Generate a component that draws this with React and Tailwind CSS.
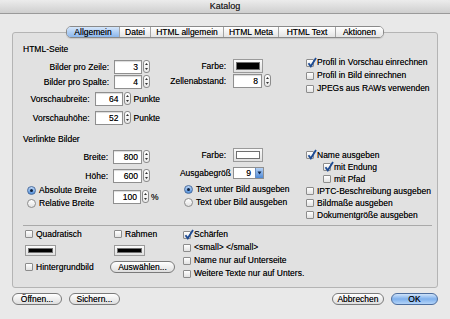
import React from 'react'

function Check({ checked }) {
  return (
    <span className="relative inline-block w-[8px] h-[8px] shrink-0 border border-[#8c8c8c] rounded-[1px] bg-gradient-to-b from-white to-[#e2e2e2]">
      {checked && (
        <svg className="absolute left-[0px] top-[-3px]" width="10" height="11" viewBox="0 0 10 11">
          <path d="M1.5 6.2 L3.8 9.3 L9 1" fill="none" stroke="#1d4a93" strokeWidth="1.8" />
        </svg>
      )}
    </span>
  )
}

function CheckRow({ checked, label, h = 'h-[12px]', className = '' }) {
  return (
    <div className={`flex items-center gap-[3px] ${h} ${className}`}>
      <Check checked={checked} />
      <span>{label}</span>
    </div>
  )
}

function Radio({ on }) {
  return on ? (
    <span className="flex items-center justify-center w-[9px] h-[9px] shrink-0 rounded-full border border-[#4b6d9e] bg-gradient-to-b from-[#bcd6f6] to-[#4f8ed8]">
      <span className="w-[3px] h-[3px] rounded-full bg-[#10203c]" />
    </span>
  ) : (
    <span className="inline-block w-[9px] h-[9px] shrink-0 rounded-full border border-[#8c8c8c] bg-gradient-to-b from-white to-[#e2e2e2]" />
  )
}

function RadioRow({ on, label }) {
  return (
    <div className="flex items-center gap-[3px] h-[13px]">
      <Radio on={on} />
      <span>{label}</span>
    </div>
  )
}

function Stepper() {
  return (
    <span className="inline-block w-[7px] h-[13px] shrink-0 rounded-[3px] border border-[#8c8c8c] bg-gradient-to-b from-white to-[#e8e8e8]">
      <svg width="5" height="11" viewBox="0 0 5 11" className="block">
        <path d="M2.5 2 L4 4 L1 4 Z" fill="#333" />
        <path d="M2.5 9 L4 7 L1 7 Z" fill="#333" />
      </svg>
    </span>
  )
}

function Field({ value, w = 'w-[28px]' }) {
  return (
    <span className={`flex items-center justify-end h-[14px] ${w} pr-[3px] border border-[#8f8f8f] bg-white shadow-[inset_0_1px_1px_rgba(0,0,0,0.15)]`}>
      {value}
    </span>
  )
}

function Well({ fill = 'bg-black', size = 'w-[30px] h-[14px]' }) {
  return (
    <span className={`block ${size} p-[2px] border border-[#9a9a9a] bg-gradient-to-b from-[#fbfbfb] to-[#e0e0e0]`}>
      <span className={`block w-full h-full border border-[#6f6f6f] ${fill}`} />
    </span>
  )
}

function Pill({ children, w, ok = false, h = 'h-[12px]' }) {
  const skin = ok
    ? 'border-[#4e6e9e] bg-gradient-to-b from-[#cfe3f9] via-[#7fb0ec] to-[#b4d4f8]'
    : 'border-[#7a7a7a] bg-gradient-to-b from-white to-[#dedede]'
  return (
    <span className={`flex items-center justify-center ${w} ${h} rounded-full border ${skin}`}>
      {children}
    </span>
  )
}

const tabs = [
  ['Allgemein', 'w-[52px]'],
  ['Datei', 'w-[31px]'],
  ['HTML allgemein', 'w-[73px]'],
  ['HTML Meta', 'w-[55px]'],
  ['HTML Text', 'w-[57px]'],
  ['Aktionen', 'w-[48px]'],
]

export default function App() {
  return (
    <div className="w-[450px] h-[319px] overflow-hidden bg-[#e9e9e9] text-black text-[8.5px] leading-none font-['Liberation_Sans',Arial,sans-serif] [text-shadow:0_0_0.5px_rgba(0,0,0,0.55)]">
      {/* title bar */}
      <div className="h-[14px] flex items-center justify-center rounded-t-[4px] border-b border-[#9a9a9a] bg-gradient-to-b from-[#ececec] to-[#cfcfcf] text-[9px] text-[#222]">
        Katalog
      </div>

      {/* tabs */}
      <div className="relative z-10 mt-[12px] flex justify-center">
        <div className="flex h-[12px] rounded-[5px] border border-[#8a8a8a] overflow-hidden shadow-[0_1px_1px_rgba(0,0,0,0.12)] text-[8.5px]">
          {tabs.map(([t, w], i) => (
            <span
              key={t}
              className={`flex items-center justify-center ${w} ${i > 0 ? 'border-l border-[#a3a3a3]' : ''} ${
                i === 0 ? 'bg-gradient-to-b from-[#d5e6fa] to-[#8cb7ec]' : 'bg-gradient-to-b from-white to-[#e4e4e4]'
              }`}
            >
              {t}
            </span>
          ))}
        </div>
      </div>

      {/* group box */}
      <div className="mx-[12px] mt-[-6px] h-[256px] rounded-[3px] border border-[#b4b4b4] bg-[#e1e1e1] pt-[9px] pl-[10px]">
        {/* HTML-Seite */}
        <div className="flex">
          <div className="w-[137px] flex flex-col">
            <div className="h-[14px] flex items-center">HTML-Seite</div>
            {[
              ['Bilder pro Zeile:', '3', 'mt-[4px]', false],
              ['Bilder pro Spalte:', '4', 'mt-[1px]', false],
              ['Vorschaubreite:', '64', 'mt-[3px]', true],
              ['Vorschauhöhe:', '52', 'mt-[5px]', true],
            ].map(([l, v, mt, pk]) => (
              <div key={l} className={`flex items-center h-[14px] ${mt}`}>
                <span className="w-[86px] text-right">{l}</span>
                <span className="ml-[5px]"><Field value={v} /></span>
                <span className="ml-[1px]"><Stepper /></span>
                {pk && <span className="ml-[3px]">Punkte</span>}
              </div>
            ))}
          </div>
          <div className="w-[145px] flex flex-col">
            <div className="flex items-center h-[14px] mt-[17px]">
              <span className="w-[66px] text-right">Farbe:</span>
              <span className="ml-[7px]"><Well /></span>
            </div>
            <div className="flex items-center h-[14px] mt-[1px]">
              <span className="w-[66px] text-right">Zellenabstand:</span>
              <span className="ml-[7px]"><Field value="8" w="w-[29px]" /></span>
              <span className="ml-[2px]"><Stepper /></span>
            </div>
          </div>
          <div className="flex flex-col mt-[14px] pl-[1px]">
            <CheckRow checked label="Profil in Vorschau einrechnen" h="h-[13px]" />
            <CheckRow label="Profil in Bild einrechnen" h="h-[13px]" />
            <CheckRow label="JPEGs aus RAWs verwenden" h="h-[13px]" />
          </div>
        </div>

        {/* Verlinkte Bilder */}
        <div className="flex mt-[7px]">
          <div className="w-[137px] flex flex-col">
            <div className="h-[14px] flex items-center">Verlinkte Bilder</div>
            <div className="flex items-center h-[14px] mt-[4px]">
              <span className="w-[85px] text-right">Breite:</span>
              <span className="ml-[5px]"><Field value="800" w="w-[29px]" /></span>
              <span className="ml-[1px]"><Stepper /></span>
            </div>
            <div className="flex items-center h-[14px] mt-[5px]">
              <span className="w-[85px] text-right">Höhe:</span>
              <span className="ml-[5px]"><Field value="600" w="w-[29px]" /></span>
              <span className="ml-[1px]"><Stepper /></span>
            </div>
            <div className="flex items-center mt-[1px]">
              <div className="w-[90px] flex flex-col pl-[4px]">
                <RadioRow on label="Absolute Breite" />
                <RadioRow label="Relative Breite" />
              </div>
              <Field value="100" w="w-[28px]" />
              <span className="ml-[1px]"><Stepper /></span>
              <span className="ml-[2px]">%</span>
            </div>
          </div>
          <div className="w-[145px] flex flex-col">
            <div className="flex items-center h-[14px] mt-[16px]">
              <span className="w-[66px] text-right">Farbe:</span>
              <span className="ml-[7px]"><Well fill="bg-white" /></span>
            </div>
            <div className="flex items-center h-[12px] mt-[5px]">
              <span className="w-[71px] text-right">Ausgabegröß</span>
              <span className="ml-[2px] flex h-[12px] w-[31px] border border-[#8f8f8f] bg-white">
                <span className="flex-1 flex items-center justify-end pr-[4px]">9</span>
                <span className="flex items-center justify-center w-[8px] border-l border-[#6b8fbf] bg-gradient-to-b from-[#b6d2f5] to-[#4d89d6]">
                  <svg width="5" height="4" viewBox="0 0 5 4"><path d="M0.5 0.5 L4.5 0.5 L2.5 3.5 Z" fill="#12284a" /></svg>
                </span>
              </span>
            </div>
            <div className="flex flex-col mt-[4px] pl-[24px]">
              <RadioRow on label="Text unter Bild ausgeben" />
              <RadioRow label="Text über Bild ausgeben" />
            </div>
          </div>
          <div className="flex flex-col mt-[17px] pl-[1px]">
            <CheckRow checked label="Name ausgeben" />
            <CheckRow checked label="mit Endung" className="pl-[17px]" />
            <CheckRow label="mit Pfad" className="pl-[17px]" />
            <CheckRow label="IPTC-Beschreibung ausgeben" />
            <CheckRow label="Bildmaße ausgeben" />
            <CheckRow label="Dokumentgröße ausgeben" />
          </div>
        </div>

        {/* separator */}
        <div className="mt-[4px] mr-[5px] border-t border-[#a9a9a9]" />

        {/* bottom options */}
        <div className="flex pl-[2px]">
          <div className="w-[85px] flex flex-col">
            <CheckRow label="Quadratisch" className="mt-[2px]" />
            <span className="mt-[5px]"><Well size="w-[31px] h-[11px]" /></span>
            <CheckRow label="Hintergrundbild" className="mt-[5px]" />
          </div>
          <div className="w-[73px] flex flex-col">
            <CheckRow label="Rahmen" className="mt-[2px] ml-[4px]" />
            <span className="mt-[5px] ml-[4px]"><Well size="w-[31px] h-[11px]" /></span>
            <span className="mt-[5px]"><Pill w="w-[65px]">Auswählen...</Pill></span>
          </div>
          <div className="flex flex-col mt-[2px]">
            <CheckRow checked label="Schärfen" h="h-[13px]" />
            <CheckRow label="<small> </small>" h="h-[13px]" />
            <CheckRow label="Name nur auf Unterseite" h="h-[13px]" />
            <CheckRow label="Weitere Texte nur auf Unters." h="h-[13px]" />
          </div>
        </div>
      </div>

      {/* buttons */}
      <div className="mt-[5px] px-[12px] flex items-center justify-between">
        <div className="flex gap-[7px]">
          <Pill w="w-[50px]">Öffnen...</Pill>
          <Pill w="w-[51px]">Sichern...</Pill>
        </div>
        <div className="flex gap-[7px]">
          <Pill w="w-[52px]">Abbrechen</Pill>
          <Pill w="w-[47px]" ok>OK</Pill>
        </div>
      </div>
    </div>
  )
}
